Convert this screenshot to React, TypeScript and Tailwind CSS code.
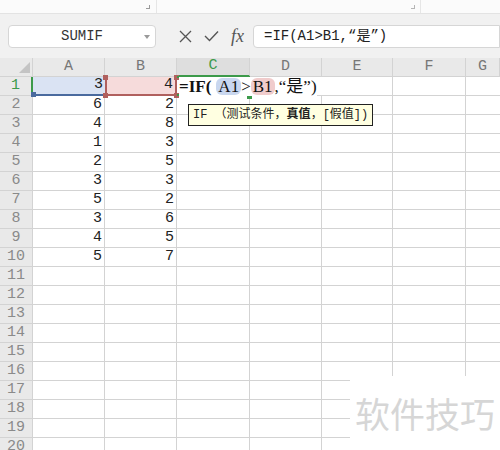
import React from 'react';

const colA = [3, 6, 4, 1, 2, 3, 5, 3, 4, 5];
const colB = [4, 2, 8, 3, 5, 3, 2, 6, 5, 7];
const letters = ['A', 'B', 'C', 'D', 'E', 'F', 'G'];

const cellFont = { fontFamily: '"Liberation Mono", "Noto Sans CJK SC", monospace' };

const Handle = ({ className }: { className: string }) => (
  <span className={`absolute w-[5px] h-[5px] ${className}`} />
);

export default function App() {
  const rows = Array.from({ length: 20 }, (_, i) => i + 1);

  return (
    <div className="relative w-[500px] h-[450px] overflow-hidden bg-white" style={cellFont}>
      {/* ribbon bottom strip */}
      <div className="flex h-[14px] bg-[#fbfbfb] border-b border-[#e3e3e3]">
        <div className="flex items-center justify-end w-[157px] pr-[6px] border-r border-[#e6e6e6]">
          <span className="w-[4px] h-[4px] border-r border-b border-[#9a9a9a]" />
        </div>
        <div className="flex items-center justify-end w-[264px] pr-[5px] border-r border-[#e6e6e6]">
          <span className="w-[4px] h-[4px] border-r border-b border-[#b5b5b5]" />
        </div>
      </div>

      {/* formula bar */}
      <div className="flex items-center h-[44px] bg-[#f1f1f1] pl-[8px]">
        <div className="relative flex items-center justify-center w-[148px] h-[23px] bg-white border border-[#d6d6d6] rounded-[4px] text-[14px] text-[#333]">
          SUMIF
          <svg className="absolute right-[5px] top-[9px]" width="6" height="4" viewBox="0 0 6 4">
            <path d="M0 0 L6 0 L3 4 Z" fill="#9a9a9a" />
          </svg>
        </div>
        <div className="flex items-center gap-[12px] ml-[23px] text-[#555]">
          <svg width="13" height="13" viewBox="0 0 13 13">
            <path d="M1 1 L12 12 M12 1 L1 12" stroke="#555" strokeWidth="1.3" fill="none" />
          </svg>
          <svg width="15" height="12" viewBox="0 0 15 12">
            <path d="M1 6 L5.5 10.5 L14 1.5" stroke="#555" strokeWidth="1.4" fill="none" />
          </svg>
          <span className="italic text-[18px] leading-none text-[#555]" style={{ fontFamily: '"Liberation Serif", serif' }}>
            fx
          </span>
        </div>
        <div className="flex items-center ml-[9px] flex-1 h-[23px] bg-white border border-[#d6d6d6] rounded-l-[4px] pl-[10px] text-[14px] text-[#222]">
          =IF(A1&gt;B1,“是”)
        </div>
      </div>

      {/* grid */}
      <div className="grid grid-cols-[33px_72px_72px_73px_72px_71px_73px_1fr] auto-rows-[19px]">
        <div className="relative bg-[#e9e9e9] border-r border-b border-[#d3d3d3]">
          <svg className="absolute left-[19px] top-[4px]" width="11" height="11" viewBox="0 0 11 11">
            <path d="M11 0 L11 11 L0 11 Z" fill="#c4c4c4" />
          </svg>
        </div>
        {letters.map((l) => (
          <div
            key={l}
            className={`flex items-center justify-center text-[15px] border-r border-[#d3d3d3] ${
              l === 'C'
                ? 'bg-[#dedede] text-[#3c9a4a] border-b-2 border-b-[#3c9a4a]'
                : 'bg-[#e9e9e9] text-[#777] border-b border-b-[#d3d3d3]'
            }`}
          >
            {l}
          </div>
        ))}

        {rows.map((r) => (
          <React.Fragment key={r}>
            <div
              className={`flex items-center justify-center text-[15px] bg-[#e9e9e9] border-b border-[#d3d3d3] ${
                r === 1 ? 'text-[#3c9a4a] border-r-2 border-r-[#3c9a4a]' : 'text-[#8a8a8a] border-r border-r-[#d3d3d3]'
              }`}
            >
              {r}
            </div>
            {r === 1 ? (
              <>
                <div className="relative flex items-center justify-end pr-[2px] text-[15px] text-[#222] bg-[#dae3f3] border-b-2 border-[#4a6a9e]">
                  3
                  <Handle className="left-[-2px] bottom-[-3px] bg-[#4a6a9e]" />
                </div>
                <div className="relative flex items-center justify-end pr-[2px] text-[15px] text-[#222] bg-[#f6dbdb] border-l-2 border-r-2 border-b-2 border-[#b0605e]">
                  4
                  <Handle className="left-[-4px] top-[-2px] bg-[#b0605e]" />
                  <Handle className="left-[-4px] bottom-[-4px] bg-[#b0605e]" />
                  <Handle className="right-[-4px] top-[-2px] bg-[#b0605e]" />
                  <Handle className="right-[-4px] bottom-[-4px] bg-[#b0605e]" />
                </div>
                <div className="relative z-10 col-span-2 border-b border-[#d3d3d3]">
                  <div className="absolute left-0 top-[-1px] w-[73px] h-[20px] border-t-2 border-b-2 border-[#3c9a4a]" />
                  <Handle className="left-[70px] bottom-[-4px] bg-[#3c9a4a]" />
                  <div
                    className="absolute left-[2px] top-0 h-[19px] flex items-center text-[17px] text-[#111] bg-white whitespace-nowrap"
                    style={{ fontFamily: '"Liberation Serif", "Noto Sans CJK SC", serif' }}
                  >
                    <span className="font-bold">=IF(</span>
                    <span className="ml-[5px] bg-[#c9d7ef] rounded-[6px] px-[2px] leading-[17px]">A1</span>
                    <span>&gt;</span>
                    <span className="bg-[#f0cccc] rounded-[6px] px-[2px] leading-[17px]">B1</span>
                    <span>,“是”)</span>
                  </div>
                </div>
                <div className="border-r border-b border-[#d3d3d3]" />
                <div className="border-r border-b border-[#d3d3d3]" />
                <div className="border-b border-[#d3d3d3]" />
              </>
            ) : (
              <>
                <div className="flex items-center justify-end pr-[2px] text-[15px] text-[#222] border-r border-b border-[#d3d3d3]">
                  {colA[r - 1] ?? ''}
                </div>
                <div className="flex items-center justify-end pr-[2px] text-[15px] text-[#222] border-r border-b border-[#d3d3d3]">
                  {colB[r - 1] ?? ''}
                </div>
                {[0, 1, 2, 3].map((c) => (
                  <div key={c} className="border-r border-b border-[#d3d3d3]" />
                ))}
                <div className="border-b border-[#d3d3d3]" />
              </>
            )}
          </React.Fragment>
        ))}
      </div>

      {/* function tooltip */}
      <div className="absolute left-[188px] top-[104px] h-[22px] w-[185px] flex items-center pl-[4px] bg-[#ffffe1] border border-[#222] text-[12px] text-[#222] whitespace-nowrap z-20">
        IF （测试条件，<span className="font-bold">真值</span>，[假值])
      </div>

      {/* watermark */}
      <div
        className="absolute left-[350px] top-[376px] w-[150px] h-[74px] bg-white flex items-center justify-center text-[35px] text-[#d6d6d6] z-20"
        style={{ fontFamily: '"Noto Sans CJK SC", sans-serif' }}
      >
        软件技巧
      </div>
    </div>
  );
}
